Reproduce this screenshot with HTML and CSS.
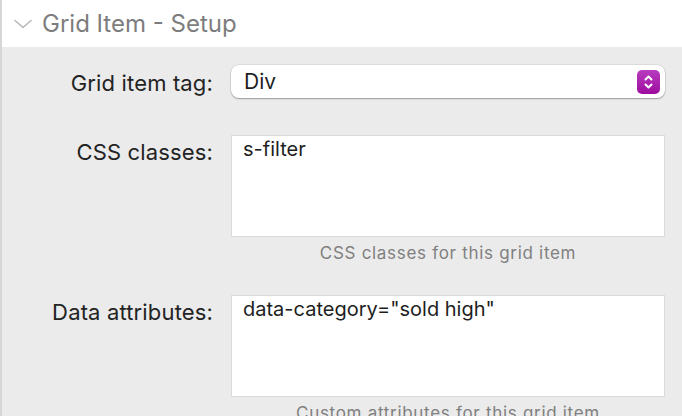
FILE: index.html
```html
<!DOCTYPE html>
<html lang="en">
<head>
    <meta charset="UTF-8">
    <meta name="viewport" content="width=device-width, initial-scale=1.0">
    <title>Grid Item - Setup</title>
    <link rel="stylesheet" href="styles.css">
</head>
<body>
    <div class="panel">
        <div class="panel-header">
            <svg class="chevron" width="18" height="10" viewBox="0 0 18 10">
                <polyline points="1,1.5 9,8.5 17,1.5" />
            </svg>
            <span class="panel-title">Grid Item - Setup</span>
        </div>

        <div class="panel-body">
            <div class="row row-center">
                <label class="row-label" for="item-tag">Grid item tag:</label>
                <div class="select" id="item-tag">
                    <span class="select-value">Div</span>
                    <span class="stepper">
                        <svg width="23" height="24" viewBox="0 0 23 24">
                            <polyline points="8.5,9.5 11.5,6.5 14.5,9.5" />
                            <polyline points="8.5,14.5 11.5,17.5 14.5,14.5" />
                        </svg>
                    </span>
                </div>
            </div>

            <div class="row row-classes">
                <label class="row-label" for="css-classes">CSS classes:</label>
                <div class="field">
                    <textarea id="css-classes" class="text-box" readonly>s-filter</textarea>
                    <div class="hint">CSS classes for this grid item</div>
                </div>
            </div>

            <div class="row row-attrs">
                <label class="row-label" for="data-attrs">Data attributes:</label>
                <div class="field">
                    <textarea id="data-attrs" class="text-box" readonly>data-category="sold high"</textarea>
                    <div class="hint">Custom attributes for this grid item</div>
                </div>
            </div>
        </div>
    </div>
</body>
</html>
```

FILE: styles.css
```css
html, body {
    margin: 0;
    padding: 0;
    height: 100%;
    overflow: hidden;
}

body {
    font-family: Inter, "Liberation Sans", sans-serif;
    background-color: #ebebeb;
    color: #222;
}

.panel {
    border-left: 2px solid #d6d6d6;
    min-height: 100%;
}

.panel-header {
    height: 47px;
    background-color: #fff;
    display: flex;
    align-items: center;
    padding-left: 12px;
    gap: 10px;
}

.chevron polyline {
    fill: none;
    stroke: #b8b8b8;
    stroke-width: 1.6;
    stroke-linecap: round;
    stroke-linejoin: round;
}

.panel-title {
    font-size: 24px;
    color: #7d7d7d;
}

.panel-body {
    padding-top: 18px;
}

.row {
    display: grid;
    grid-template-columns: 211px 434px;
    column-gap: 18px;
    align-items: start;
}

.row-center {
    align-items: center;
}

.row-classes {
    margin-top: 37px;
}

.row-attrs {
    margin-top: 32px;
}

.row-label {
    text-align: right;
    font-size: 22px;
    line-height: 26px;
    letter-spacing: 0.15px;
    color: #232323;
    padding-top: 4px;
}

.row-center .row-label {
    padding-top: 2px;
}

.select {
    height: 33px;
    background-color: #fff;
    border-radius: 8px;
    box-shadow: 0 1px 1.5px rgba(0, 0, 0, 0.3), 0 0 0 0.5px rgba(0, 0, 0, 0.12);
    display: flex;
    align-items: center;
    justify-content: space-between;
    padding: 0 5px 0 13px;
}

.select-value {
    font-size: 21px;
    color: #1e1e1e;
}

.stepper {
    width: 23px;
    height: 24px;
    border-radius: 5px;
    background: linear-gradient(#b73cbf, #9f0d9f);
    display: flex;
}

.stepper polyline {
    fill: none;
    stroke: #fff;
    stroke-width: 2;
    stroke-linecap: round;
    stroke-linejoin: round;
}

.field {
    display: flex;
    flex-direction: column;
}

.text-box {
    height: 102px;
    box-sizing: border-box;
    border: 1px solid #dadada;
    background-color: #fff;
    font-family: Inter, "Liberation Sans", sans-serif;
    font-size: 20px;
    line-height: 22px;
    color: #1e1e1e;
    padding: 2px 11px;
    margin: 0;
    resize: none;
    outline: none;
    overflow: hidden;
}

.hint {
    margin-top: 6px;
    text-align: center;
    font-size: 17px;
    line-height: 20px;
    letter-spacing: 0.7px;
    color: #808080;
}
```
